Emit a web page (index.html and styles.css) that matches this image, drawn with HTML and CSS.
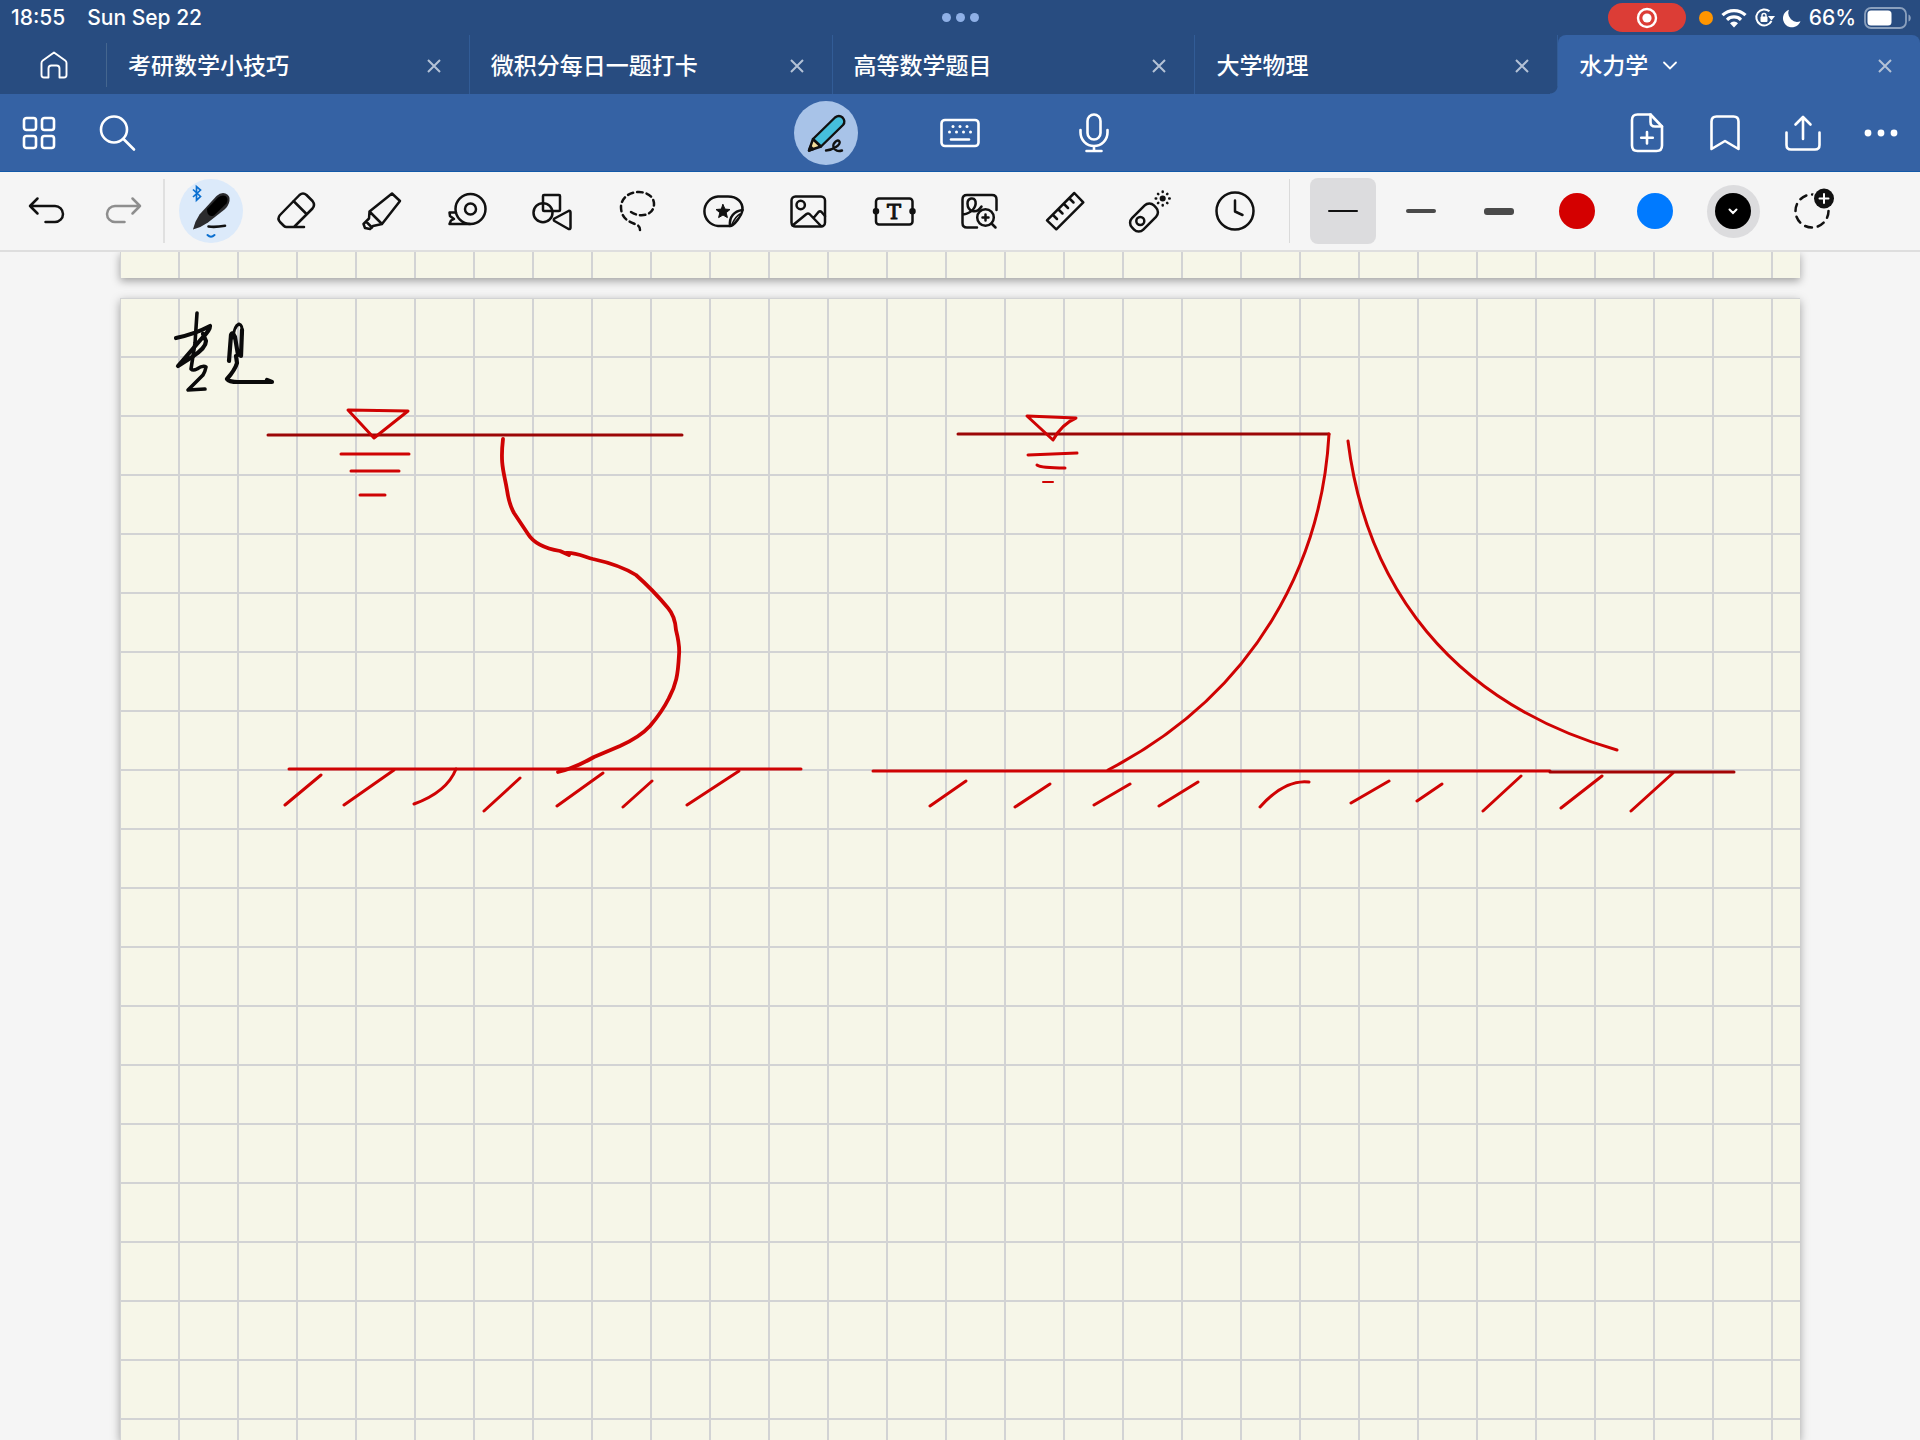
FILE: index.html
```html
<!DOCTYPE html>
<html lang="zh-CN">
<head>
<meta charset="utf-8">
<title>水力学</title>
<link rel="stylesheet" href="styles.css">
</head>
<body>
<header class="status">
  <div class="status-left"><span>18:55</span><span>Sun Sep 22</span></div>
  <div class="window-dots"><i></i><i></i><i></i></div>
  <div class="status-right">
    <span class="record"><svg width="22" height="22" viewBox="0 0 22 22"><circle cx="11" cy="11" r="9" fill="none" stroke="#fff" stroke-width="2.4"/><circle cx="11" cy="11" r="4.6" fill="#fff"/></svg></span>
    <span class="mic-dot"></span>
    <svg width="26" height="20" viewBox="0 0 26 20"><g fill="none" stroke="#fff" stroke-width="3.2"><path d="M1.500 7.200a16.500 16.500 0 0 1 23 0"/><path d="M6 11.800a10 10 0 0 1 14 0"/></g><path d="M13 19.500l-4-4.200a5.600 5.600 0 0 1 8 0z" fill="#fff"/></svg>
    <svg width="20" height="20" viewBox="0 0 20 20"><path d="M14.500 3.300A8 8 0 1 0 16.500 13" fill="none" stroke="#fff" stroke-width="2"/><path d="M13 8h7l-3.500 4.500z" fill="#fff"/><rect x="5.500" y="8.500" width="7" height="5.500" rx="1" fill="#fff"/><path d="M7 9V7.500a2 2 0 0 1 4 0V9" fill="none" stroke="#fff" stroke-width="1.400"/></svg>
    <svg width="18" height="18" viewBox="0 0 18 18"><path d="M6 .8a9 9 0 1 0 11.500 11.400A8.800 8.800 0 0 1 6 .8z" fill="#fff"/></svg>
    <span class="percent">66%</span>
    <svg class="battery" width="48" height="22" viewBox="0 0 48 22"><rect x="1" y="1" width="41" height="20" rx="6" fill="none" stroke="#8ba0bd" stroke-width="1.800"/><rect x="3.500" y="3.500" width="24" height="15" rx="3.500" fill="#fff"/><path d="M44.500 7.500v7c3-1 3-6 0-7z" fill="#8ba0bd"/></svg>
  </div>
</header>

<nav class="tabs">
  <button class="home" aria-label="Home"><svg width="28" height="28" viewBox="0 0 28 28"><path d="M14 1.500 2.800 9.600Q1.500 10.600 1.500 12V24q0 2.500 2.500 2.500H8.500V17.500Q8.500 14.500 11.500 14.500h5Q19.500 14.500 19.500 17.500V26.500H24q2.500 0 2.500-2.500V12q0-1.400-1.300-2.400z" fill="none" stroke="#fff" stroke-width="1.900" stroke-linejoin="round"/></svg></button>
  <div class="tab"><button class="tab-title">考研数学小技巧</button><button class="close" aria-label="Close"><svg width="14" height="14" viewBox="0 0 14 14"><path d="M1 1l12 12M13 1 1 13"/></svg></button></div>
  <div class="tab"><button class="tab-title">微积分每日一题打卡</button><button class="close" aria-label="Close"><svg width="14" height="14" viewBox="0 0 14 14"><path d="M1 1l12 12M13 1 1 13"/></svg></button></div>
  <div class="tab"><button class="tab-title">高等数学题目</button><button class="close" aria-label="Close"><svg width="14" height="14" viewBox="0 0 14 14"><path d="M1 1l12 12M13 1 1 13"/></svg></button></div>
  <div class="tab"><button class="tab-title">大学物理</button><button class="close" aria-label="Close"><svg width="14" height="14" viewBox="0 0 14 14"><path d="M1 1l12 12M13 1 1 13"/></svg></button></div>
  <div class="tab active"><button class="tab-title">水力学<svg width="14" height="9" viewBox="0 0 14 9"><path d="M1 1.500l6 6 6-6" fill="none" stroke="#fff" stroke-width="1.800" stroke-linecap="round"/></svg></button><button class="close" aria-label="Close"><svg width="14" height="14" viewBox="0 0 14 14"><path d="M1 1l12 12M13 1 1 13"/></svg></button></div>
</nav>

<div class="navbar">
  <div class="nav-group">
    <button aria-label="Pages"><svg class="line" width="34" height="34" viewBox="0 0 34 34"><rect x="2" y="2" width="12" height="12" rx="2.500"/><rect x="20" y="2" width="12" height="12" rx="2.500"/><rect x="2" y="20" width="12" height="12" rx="2.500"/><rect x="20" y="20" width="12" height="12" rx="2.500"/></svg></button>
    <button aria-label="Search"><svg class="line" width="36" height="36" viewBox="0 0 36 36"><circle cx="15" cy="14.500" r="13"/><path d="M24.500 24 35 34.500"/></svg></button>
  </div>
  <div class="nav-group modes">
    <button class="mode-on" aria-label="Write"><svg width="64" height="64" viewBox="0 0 64 64"><g stroke="#111" stroke-width="2.400" stroke-linejoin="round" stroke-linecap="round"><path d="M19 38 15 49.500 27 45.500z" fill="#f3dc9a"/><path d="M19 38 41 16.500q4-3 7.500 0 3.500 4 .5 7.500L27 45.500z" fill="#45bfdb"/><path d="M15 49.500l1.500-4 2.500 2.600z" fill="#111"/><path d="M32 49.500C38 49.500 47 44 45.500 40.500 44 37.500 38.500 42 39.500 46c1 4 5 4.500 8.500 3.500" fill="none"/></g></svg></button>
    <button aria-label="Keyboard"><svg class="line" width="40" height="30" viewBox="0 0 40 30"><rect x="1.500" y="2" width="37" height="26" rx="3.500"/><path d="M11 21.500h18"/><g fill="#fff" stroke="none"><circle cx="13" cy="8.500" r="1.500"/><circle cx="20" cy="8.500" r="1.500"/><circle cx="27" cy="8.500" r="1.500"/><circle cx="9.500" cy="14" r="1.500"/><circle cx="16.500" cy="14" r="1.500"/><circle cx="23.500" cy="14" r="1.500"/><circle cx="30.500" cy="14" r="1.500"/></g></svg></button>
    <button aria-label="Record audio"><svg class="line" width="30" height="40" viewBox="0 0 30 40"><rect x="8.500" y="1.500" width="13" height="25" rx="6.500"/><path d="M1.500 17v2.500a13.500 13.500 0 0 0 27 0V17M15 33v5M7.500 38h15"/></svg></button>
  </div>
  <div class="nav-group right">
    <button aria-label="Add page"><svg class="line" width="34" height="40" viewBox="0 0 34 40"><path d="M20.500 1.500H7.500q-5.500 0-5.500 5.500V32.500Q2 38 7.500 38h19Q32 38 32 32.500V13.500z"/><path d="M20.500 1.500V9q0 4.500 4.500 4.500h7M17 19v11.500M11.200 24.800h11.600"/></svg></button>
    <button aria-label="Bookmark"><svg class="line" width="30" height="36" viewBox="0 0 30 36"><path d="M1.500 34V6.500Q1.500 1.500 6.500 1.500h17Q28.500 1.500 28.500 6.500V34L15 26z"/></svg></button>
    <button aria-label="Share"><svg class="line" width="36" height="36" viewBox="0 0 36 36"><path d="M1.500 17.500V30q0 4.500 4.500 4.500H30q4.500 0 4.500-4.500V17.500M18 24V2M10.500 9.500 18 2l7.500 7.500"/></svg></button>
    <button aria-label="More"><svg width="34" height="8" viewBox="0 0 34 8" fill="#fff"><circle cx="4" cy="4" r="3.400"/><circle cx="17" cy="4" r="3.400"/><circle cx="30" cy="4" r="3.400"/></svg></button>
  </div>
</div>

<div class="toolbar">
  <div class="history">
    <button aria-label="Undo"><svg class="ink" viewBox="0 0 48 48"><path d="M15.500 11.500 8 19l7.500 7.500M8 19H33a8 8 0 0 1 0 16H23.500"/></svg></button>
    <button aria-label="Redo" disabled><svg class="ink" viewBox="0 0 48 48"><path d="M32.500 11.500 40 19l-7.500 7.500M40 19H15a8 8 0 0 0 0 16h9.500"/></svg></button>
  </div>
  <div class="tools">
    <button aria-label="Pen"><span class="tool-on"><svg viewBox="0 0 48 48"><path d="M6 2.500l7.500 7-4 3.700V-.5l4 3.500-7.500 7" fill="none" stroke="#0a6fd0" stroke-width="1.700"/><path d="M6 42.500Q8 34 12.500 27.500L29.500 9q4.500-4 9-2.500 5 2 4 7.500-1 5-5 8.500L21 35.500Q14 40.500 6 42.500z" fill="#2b2b2d"/><path d="M20 22 31 10.500q4-3 7.500-1.500 3.500 2.500 1 7.500L27 28.500Q20 31 20 22z" fill="#000"/><path d="M21.500 39.500Q28 40.500 38 38.800" fill="none" stroke="#111" stroke-width="2.600" stroke-linecap="round"/><path d="M20.500 48q3.500 3.500 7 0" fill="none" stroke="#0a6fd0" stroke-width="2" stroke-linecap="round"/></svg></span></button>
    <button aria-label="Eraser"><svg class="ink" viewBox="0 0 48 48"><path d="M32 40H14.500q-1.500 0-2.500-1L8 35q-3-3.500 0-7L27.500 8q3.500-3 7 0L40.500 14q3 4 0 7.500L22 40M21.500 14 34.500 27"/></svg></button>
    <button aria-label="Highlighter"><svg class="ink" viewBox="0 0 48 48"><path d="M12.500 24.500 35 6.500l8 7.500L25 37zM12.500 24.500 12 31.500 6.500 37l1.500 4 5 1 3-3 9-2M9.500 35l5.500 5.500"/></svg></button>
    <button aria-label="Tape"><svg class="ink" viewBox="0 0 48 48"><circle cx="27.500" cy="22" r="15"/><circle cx="27.500" cy="22" r="5.500"/><path d="M27 37H6.500L8 33.500 11 32 7 29 6.500 25.500H13"/></svg></button>
    <button aria-label="Shapes"><svg class="ink" viewBox="0 0 48 48"><rect x="15" y="8" width="17" height="16" rx="1"/><circle cx="15" cy="25.700" r="9.500"/><path d="M26.500 31.500 40.500 24q2-.7 2 1.500v15q0 2-2 1.500L26.500 34q-1.500-1.200 0-2.500z"/></svg></button>
    <button aria-label="Lasso"><svg class="ink" viewBox="0 0 48 48"><path stroke-dasharray="5.500 4" d="M17 25C27 31.500 40 28 40 17 40 9 32 5 25 5 14 5 7 12 7 20c0 12 9 15 14 17 4 1.500 5 3 5 6"/></svg></button>
    <button aria-label="Stickers"><svg class="ink" viewBox="0 0 48 48"><path d="M31 39H19A14.800 14.800 0 0 1 19 9.500h10C38 9.500 44 15 43.500 23 43 28 35 39 31 39z"/><path d="M31 39C30 30 35 24 43.500 23"/><path d="M33 37C35 33 37 29 41 27" stroke-width="1.500"/><path fill="#111" stroke-width="1" d="M24 17.500l2 4.600 5 .4-3.800 3.200 1.200 4.900-4.400-2.600-4.400 2.600 1.200-4.900-3.800-3.200 5-.4z"/></svg></button>
    <button aria-label="Image"><svg class="ink" viewBox="0 0 48 48"><rect x="7.500" y="9.500" width="33.500" height="30" rx="4"/><circle cx="16.700" cy="18" r="4.200"/><path d="M8.500 38.500 22.500 27q1.500-1 3 0L37 39M29.500 31l5-6q1.500-1.500 3 0l3.500 4"/></svg></button>
    <button aria-label="Text"><svg class="ink" viewBox="0 0 48 48"><rect x="6" y="11.500" width="36.500" height="26" rx="3"/><circle cx="6" cy="24.300" r="2" fill="#111"/><circle cx="42.500" cy="24.300" r="2" fill="#111"/><text class="tee" x="24" y="32" text-anchor="middle">T</text></svg></button>
    <button aria-label="Zoom window"><svg class="ink" viewBox="0 0 48 48"><path d="M22 40.500H12q-4.500 0-4.500-4.500V12.500Q7.500 8 12 8H37q4.500 0 4.500 4.500V23M8 27.500C17 26 21.500 20 20.500 14.500 19.500 9.500 12.500 11 12.500 16.500 12.500 24 21 28 26.500 19.500"/><circle cx="30.500" cy="30.500" r="8.300"/><path d="M36.500 36.500l4 4M30.500 27.500v6M27.500 30.500h6"/></svg></button>
    <button aria-label="Ruler"><svg class="ink" viewBox="0 0 48 48"><path d="M6 33.300 33.300 6 42.300 15.300 15.300 42.300zM12 28l4 4M17.500 22.500l4 4M23 17l4 4M28.500 11.500l4 4"/></svg></button>
    <button aria-label="Laser pointer"><svg class="ink" viewBox="0 0 48 48"><rect x="2.500" y="22.500" width="31" height="16" rx="6.500" transform="rotate(-45 18 30.500)"/><circle cx="14.300" cy="34" r="4"/><circle cx="36.700" cy="11.500" r="1.800" fill="#111"/><path d="M36.700 5V4.500M36.700 18.500V18M29.700 11.500h.5M43.200 11.500h.5M32 6.800l.3.300M41.400 6.800l-.3.300M32 16.200l.3-.3M41.400 16.200l-.3-.3"/></svg></button>
    <button aria-label="History"><svg class="ink" viewBox="0 0 48 48"><circle cx="24" cy="24" r="18.500"/><path d="M24 13.500V24.500l7.500 3.500"/></svg></button>
  </div>
  <div class="presets">
    <button aria-label="Thin stroke"><span class="stroke-box chosen"><i class="bar thin"></i></span></button>
    <button aria-label="Medium stroke"><span class="stroke-box"><i class="bar medium"></i></span></button>
    <button aria-label="Thick stroke"><span class="stroke-box"><i class="bar thick"></i></span></button>
    <button aria-label="Red"><span class="swatch red"></span></button>
    <button aria-label="Blue"><span class="swatch blue"></span></button>
    <button aria-label="Black"><span class="ring"><span class="swatch black"><svg width="10" height="7" viewBox="0 0 10 7"><path d="M1.500 1.500 5 5l3.500-3.500" fill="none" stroke="#fff" stroke-width="2" stroke-linecap="round"/></svg></span></span></button>
    <button aria-label="Add colour"><svg class="ink" viewBox="0 0 48 48"><circle cx="25" cy="24" r="16.500" stroke-dasharray="7 5.900"/><circle cx="37" cy="11.500" r="11.500" fill="#f5f5f5" stroke="none"/><circle cx="37" cy="11.500" r="10" fill="#111" stroke="none"/><path d="M37 7v9M32.500 11.500h9" stroke="#fff" stroke-width="2"/></svg></button>
  </div>
</div>

<main class="canvas">
  <section class="paper previous"></section>
  <section class="paper current">
    <svg class="drawing" viewBox="120 298 1680 1142" fill="none" stroke-linecap="round" stroke-linejoin="round">
      <g stroke="#0a0a0a" stroke-width="4.200">
        <path stroke-width="3.600" d="M197 313 195 343 191 369Q193 371 197 369 203 365 206 367 205 372 203 375L188 390 205 389"/>
        <path d="M176 338Q195 334 210 326 210 330 203 337L178 366 192 357Q206 348 206 341L203 334"/>
        <path d="M229 361 231 335Q232 331 235 337L238 355M242 330 241 356"/>
        <path stroke-width="3" d="M233 338Q234 326 239 324 243 325 242 334"/>
        <path d="M236 356 237 363Q235 370 227 379 229 382 238 382H272L267 380"/>
      </g>
      <g stroke="#9c0606" stroke-width="3">
        <path d="M268 435H682M958 434H1329"/>
      </g>
      <g stroke="#cf0303" stroke-width="3">
        <path d="M348 410 408 411 374 438zM341 454H409M351 471H399M360 495H385"/>
        <path stroke-width="3.800" d="M503 439C500 465 504 472 507 490Q509 504 514 513L528 534Q536 547 560 551L569 555M566 553C575 552 585 557 593 559Q620 565 636 575 653 590 668 608 675 616 676 630 680 646 679 655C678 675 676 685 669 698Q662 712 650 726 640 737 620 746L594 757Q575 768 558 772"/>
        <path d="M289 769H801"/>
        <path d="M285 805 321 775M344 805 394 770M414 804Q447 792 456 769M484 811 520 778M557 806 603 773M623 807 652 781M687 805 739 771"/>
        <path d="M1053 440 1027 416 1076 418Q1062 424 1053 440M1028 455 1077 453M1037 465Q1041 468 1065 468"/>
        <path stroke-width="2" d="M1043 482H1053"/>
        <path d="M1329 434C1322 560 1258 692 1108 770M1348 441C1366 585 1450 702 1617 750"/>
        <path d="M873 771H1550"/>
        <path d="M930 806 966 781M1015 807 1050 784M1094 805 1130 784M1159 806 1198 782M1260 807Q1285 779 1309 782M1351 803 1389 781M1417 801 1442 784M1483 811 1521 776M1561 808 1602 776M1631 811 1673 773"/>
      </g>
      <path d="M1550 772H1734" stroke="#a30404" stroke-width="3"/>
    </svg>
  </section>
</main>
</body>
</html>
```
FILE: styles.css
```css
* { box-sizing: border-box; }

body {
  margin: 0;
  height: 100vh;
  display: flex;
  flex-direction: column;
  overflow: hidden;
  background: #f4f4f4;
  color: #fff;
  font-family: Inter, "Noto Sans CJK SC", sans-serif;
}

button {
  display: flex;
  align-items: center;
  justify-content: center;
  margin: 0;
  padding: 0;
  border: 0;
  background: none;
  color: inherit;
  font: inherit;
}

svg { display: block; flex: none; overflow: visible; }

/* Status bar */
.status {
  display: grid;
  grid-template-columns: 1fr auto 1fr;
  align-items: center;
  height: 35px;
  padding: 0 8px;
  background: #284c80;
  font-size: 21px;
  font-weight: 500;
}
.status-left { display: flex; gap: 22px; padding-left: 3px; }
.window-dots { display: flex; gap: 5px; }
.window-dots i { width: 9px; height: 9px; border-radius: 50%; background: #8fb0e6; }
.status-right { display: flex; align-items: center; justify-content: flex-end; gap: 8px; }
.record {
  display: flex;
  align-items: center;
  justify-content: center;
  width: 78px;
  height: 29px;
  margin-right: 5px;
  border-radius: 15px;
  background: #dc3d36;
}
.mic-dot { width: 14px; height: 14px; border-radius: 50%; background: #ff9500; }

/* Document tabs */
.tabs { display: flex; height: 59px; background: #284c80; }
.home { position: relative; width: 107px; }
.home::after {
  content: "";
  position: absolute;
  right: 0;
  top: 8px;
  width: 1px;
  height: 44px;
  background: #45668f;
}
.tab {
  flex: 1;
  display: flex;
  align-items: center;
  justify-content: space-between;
  padding: 2px 15px 0 21px;
  border-right: 1px solid #325c96;
}
.tab-title { gap: 15px; font-size: 23px; line-height: 34px; font-weight: 500; }
.close { width: 40px; height: 40px; }
.close path { fill: none; stroke: #b4c2d6; stroke-width: 2; }
.tab.active {
  position: relative;
  border-right: 0;
  border-radius: 8px 8px 0 0;
  background: #3562a4;
}
.tab.active::before {
  content: "";
  position: absolute;
  left: -8px;
  bottom: 0;
  width: 8px;
  height: 8px;
  background: radial-gradient(circle at 0 0, #284c80 7px, #3562a4 8px);
}

/* Navigation bar */
.navbar {
  display: grid;
  grid-template-columns: 1fr auto 1fr;
  align-items: center;
  height: 78px;
  padding: 0 7px;
  border-bottom: 1px solid #1259a8;
  background: #3562a4;
}
.nav-group { display: flex; gap: 14px; }
.nav-group.modes { gap: 70px; }
.nav-group.right { justify-content: flex-end; }
.nav-group button { width: 64px; height: 64px; border-radius: 50%; }
.nav-group .mode-on { background: #a8c3e8; }
.line { fill: none; stroke: #fff; stroke-width: 2.6px; stroke-linecap: round; stroke-linejoin: round; }

/* Tool bar */
.toolbar {
  display: flex;
  align-items: center;
  height: 80px;
  padding: 0 70px 0 7px;
  border-bottom: 2px solid #dedede;
  background: #f5f5f5;
  color: #111;
}
.history, .presets { display: flex; align-items: center; height: 64px; }
.history { border-right: 2px solid #e0e0e0; }
.history button, .presets button { width: 78px; height: 64px; }
.history button:disabled { color: #8e8e8e; }
.tools { flex: 1; display: flex; padding: 0 11px 0 3px; }
.tools button { flex: 1; height: 64px; }
.presets { padding-left: 14px; border-left: 1px solid #dadada; }
.toolbar button > svg, .tool-on svg { width: 48px; height: 48px; }
.ink { fill: none; stroke: currentColor; stroke-width: 2.5px; stroke-linecap: round; stroke-linejoin: round; }
.tee { fill: #111; stroke: #111; stroke-width: 1px; font-family: "DejaVu Serif", serif; font-size: 21px; }
.tool-on, .stroke-box, .ring, .swatch { display: flex; align-items: center; justify-content: center; }
.tool-on { width: 64px; height: 64px; border-radius: 50%; background: #dceafa; }
.stroke-box { flex: none; width: 66px; height: 66px; border-radius: 8px; }
.stroke-box.chosen { background: #dcdcde; }
.bar { width: 30px; border-radius: 3px; background: #4a4a4a; }
.thin { height: 2px; background: #111; }
.medium { height: 4px; }
.thick { height: 7px; }
.swatch { width: 36px; height: 36px; border-radius: 50%; }
.red { background: #d40000; }
.blue { background: #007aff; }
.black { background: #000; }
.ring { width: 53px; height: 53px; border-radius: 50%; background: #dcdcde; }

/* Notebook pages */
.canvas {
  flex: 1;
  min-height: 0;
  display: flex;
  flex-direction: column;
  gap: 20px;
  padding: 0 120px;
  overflow: hidden;
  background: #f5f5f5;
}
.paper {
  background-color: #f6f6e8;
  background-image:
    linear-gradient(to right, #d2d3d4 2px, transparent 2px),
    linear-gradient(to bottom, #d2d3d4 2px, transparent 2px);
  background-size: 59px 59px;
  background-position: 58px 58px;
  box-shadow: 0 3px 9px rgba(0, 0, 0, 0.35);
}
.previous { flex: none; height: 26px; background-position: 58px 40px; }
.current { flex: 1; }
.drawing { width: 100%; }
```
